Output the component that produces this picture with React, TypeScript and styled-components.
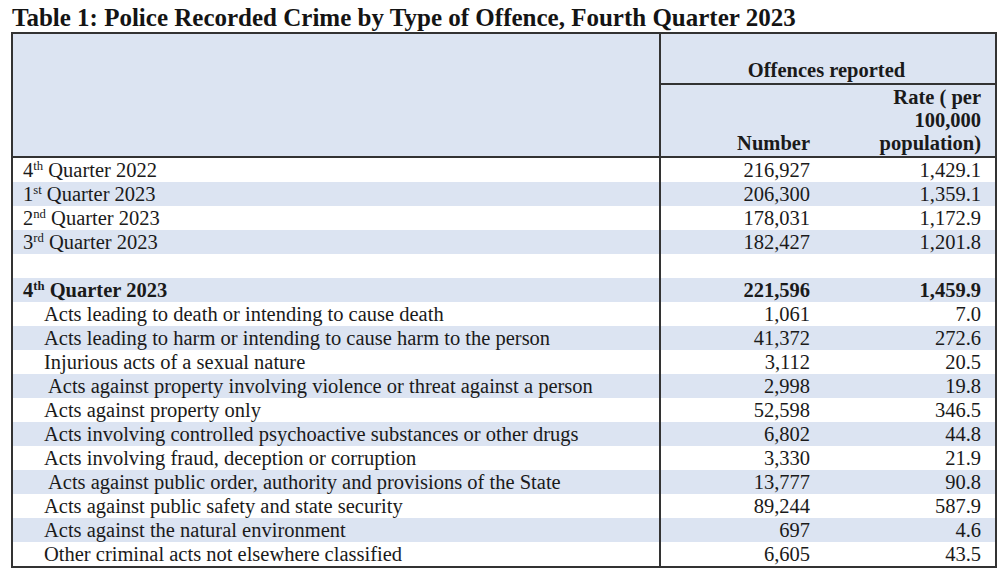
import React from "react";
import styled, { createGlobalStyle } from "styled-components";

const GlobalStyle = createGlobalStyle`
  html, body {
    margin: 0;
    padding: 0;
    background: #ffffff;
  }
  body {
    font-family: "Liberation Serif", "Times New Roman", serif;
    color: #1a1a1a;
  }
`;

const Page = styled.main`
  padding: 3px 6px 0 11px;
`;

const Title = styled.h1`
  margin: 0;
  font-size: 25px;
  line-height: 29px;
  font-weight: 700;
  color: #141414;
  padding-left: 1px;
  white-space: nowrap;
`;

const Table = styled.table`
  width: 984px;
  border-collapse: collapse;
  table-layout: fixed;
  border: 2px solid #333;
  font-size: 20.5px;
`;

const HeadCell = styled.th<{ $align?: "left" | "center" | "right"; $h?: number }>`
  background: #dce4f2;
  font-weight: 700;
  text-align: ${(p) => p.$align || "right"};
  vertical-align: bottom;
  height: ${(p) => (p.$h ? `${p.$h}px` : "auto")};
  padding: 0 13px 1px 10px;
  line-height: 23px;
  border-bottom: 2px solid #333;
  white-space: nowrap;
  &.divider {
    border-left: 2px solid #333;
  }
  &.rate {
    padding-right: 14px;
  }
`;

const Row = styled.tr<{ $shade: boolean }>`
  background: ${(p) => (p.$shade ? "#dce4f2" : "#ffffff")};
  height: 24px;
`;

const LabelCell = styled.td<{ $indent?: boolean; $bold?: boolean }>`
  padding: 0 0 0 ${(p) => (p.$indent ? 31 : 10)}px;
  font-weight: ${(p) => (p.$bold ? 700 : 400)};
  white-space: pre;
  line-height: 24px;
  border-right: 2px solid #333;
`;

const NumCell = styled.td<{ $bold?: boolean; $last?: boolean }>`
  text-align: right;
  padding: 0 ${(p) => (p.$last ? 14 : 13)}px 0 0;
  font-weight: ${(p) => (p.$bold ? 700 : 400)};
  line-height: 24px;
  white-space: nowrap;
`;

const Sup = styled.sup`
  font-size: 0.62em;
  line-height: 0;
  vertical-align: 0.55em;
`;

type Line = {
  label: React.ReactNode;
  num: string;
  rate: string;
  indent?: boolean;
  bold?: boolean;
};

const q = (n: string, suf: string, year: string) => (
  <>
    {n}
    <Sup>{suf}</Sup> Quarter {year}
  </>
);

const rows: Line[] = [
  { label: q("4", "th", "2022"), num: "216,927", rate: "1,429.1" },
  { label: q("1", "st", "2023"), num: "206,300", rate: "1,359.1" },
  { label: q("2", "nd", "2023"), num: "178,031", rate: "1,172.9" },
  { label: q("3", "rd", "2023"), num: "182,427", rate: "1,201.8" },
  { label: "", num: "", rate: "" },
  { label: q("4", "th", "2023"), num: "221,596", rate: "1,459.9", bold: true },
  { label: "Acts leading to death or intending to cause death", num: "1,061", rate: "7.0", indent: true },
  { label: "Acts leading to harm or intending to cause harm to the person", num: "41,372", rate: "272.6", indent: true },
  { label: "Injurious acts of a sexual nature", num: "3,112", rate: "20.5", indent: true },
  { label: " Acts against property involving violence or threat against a person", num: "2,998", rate: "19.8", indent: true },
  { label: "Acts against property only", num: "52,598", rate: "346.5", indent: true },
  { label: "Acts involving controlled psychoactive substances or other drugs", num: "6,802", rate: "44.8", indent: true },
  { label: "Acts involving fraud, deception or corruption", num: "3,330", rate: "21.9", indent: true },
  { label: " Acts against public order, authority and provisions of the State", num: "13,777", rate: "90.8", indent: true },
  { label: "Acts against public safety and state security", num: "89,244", rate: "587.9", indent: true },
  { label: "Acts against the natural environment", num: "697", rate: "4.6", indent: true },
  { label: "Other criminal acts not elsewhere classified", num: "6,605", rate: "43.5", indent: true },
];

export default function App() {
  return (
    <Page>
      <GlobalStyle />
      <Title>Table 1: Police Recorded Crime by Type of Offence, Fourth Quarter 2023</Title>
      <Table>
        <colgroup>
          <col style={{ width: 648 }} />
          <col style={{ width: 163 }} />
          <col style={{ width: 173 }} />
        </colgroup>
        <thead>
          <tr>
            <HeadCell rowSpan={2} />
            <HeadCell className="divider" colSpan={2} $align="center" $h={48}>
              Offences reported
            </HeadCell>
          </tr>
          <tr>
            <HeadCell className="divider" $h={70}>
              Number
            </HeadCell>
            <HeadCell className="rate">
              Rate ( per
              <br />
              100,000
              <br />
              population)
            </HeadCell>
          </tr>
        </thead>
        <tbody>
          {rows.map((r, i) => (
            <Row key={i} $shade={i % 2 === 1}>
              <LabelCell $indent={r.indent} $bold={r.bold}>
                {r.label}
              </LabelCell>
              <NumCell $bold={r.bold}>{r.num}</NumCell>
              <NumCell $bold={r.bold} $last>
                {r.rate}
              </NumCell>
            </Row>
          ))}
        </tbody>
      </Table>
    </Page>
  );
}
